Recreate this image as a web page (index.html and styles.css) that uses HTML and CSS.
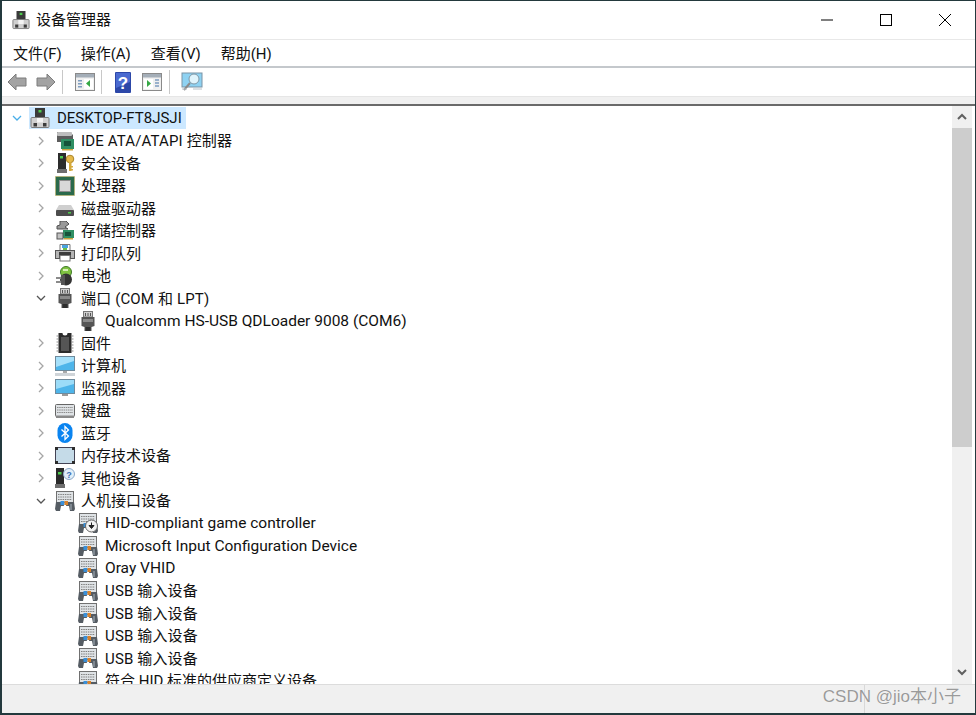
FILE: index.html
```html
<!DOCTYPE html>
<html lang="zh-CN">
<head>
    <meta charset="UTF-8">
    <title>设备管理器</title>
    <link rel="stylesheet" href="styles.css">
</head>
<body>
    <svg class="defs" width="0" height="0">
        <defs>
            <symbol id="i-root" viewBox="0 0 20 20">
                <rect x="5" y="0" width="10" height="11" fill="#3a3a3a"/>
                <rect x="8.500" y="2" width="3" height="2.500" fill="#4ccb4c"/>
                <rect x="1" y="9.500" width="18" height="10" rx="1" fill="#d0d0d0" stroke="#7c7c7c"/>
                <rect x="7" y="10" width="6" height="4.500" fill="#f4f4f4"/>
                <rect x="3.500" y="15" width="3.500" height="3.500" fill="#3c3c3c"/>
                <rect x="13" y="15" width="3.500" height="3.500" fill="#3c3c3c"/>
            </symbol>
            <symbol id="i-ide" viewBox="0 0 20 20">
                <path d="M2 1h13l3 3v7H2z" fill="#5c5c5c"/>
                <rect x="2" y="1" width="15" height="4" rx="1" fill="#bdbdbd"/>
                <rect x="6" y="8" width="13" height="10" fill="#2f8f63"/>
                <rect x="9" y="10" width="7" height="5" fill="#16543a"/>
                <rect x="7" y="18" width="11" height="1.500" fill="#c9a43c"/>
            </symbol>
            <symbol id="i-key" viewBox="0 0 20 20">
                <rect x="3" y="0" width="8" height="17" fill="#2c2c2c"/>
                <rect x="5" y="3" width="3" height="2.500" fill="#4ccb4c"/>
                <rect x="2" y="16" width="10" height="4" fill="#6e6e6e"/>
                <circle cx="15" cy="6" r="3.800" fill="#e5b94a" stroke="#a9842a"/>
                <rect x="14" y="9" width="2.500" height="9" fill="#d5a93a"/>
                <rect x="16" y="13" width="2" height="1.500" fill="#d5a93a"/>
                <rect x="16" y="16" width="2" height="1.500" fill="#d5a93a"/>
            </symbol>
            <symbol id="i-cpu" viewBox="0 0 20 20">
                <rect x="0.500" y="0.500" width="19" height="19" fill="#2f6b4c" stroke="#c9b25a" stroke-dasharray="1 1"/>
                <rect x="1.500" y="1.500" width="17" height="17" fill="#2a6a4b"/>
                <rect x="4.500" y="4.500" width="11" height="11" fill="#d8d8d8" stroke="#8c8c8c"/>
            </symbol>
            <symbol id="i-disk" viewBox="0 0 20 20">
                <path d="M4 7h12l3 5v4H1v-4z" fill="#cfcfcf"/>
                <rect x="1" y="12" width="18" height="6" rx="1" fill="#4c4c4c"/>
                <rect x="13" y="14" width="3" height="1.500" fill="#4ccb4c"/>
            </symbol>
            <symbol id="i-store" viewBox="0 0 20 20">
                <path d="M5 0h6l3 3-4 3 3 2H2V5l3-1z" fill="#9a9a9a" stroke="#505050"/>
                <rect x="8" y="9" width="11" height="8" fill="#2f8f63"/>
                <rect x="10" y="11" width="6" height="4" fill="#16543a"/>
                <rect x="2" y="12" width="6" height="6" fill="#c2c2c2" stroke="#555"/>
                <rect x="9" y="17" width="9" height="1.500" fill="#c9a43c"/>
            </symbol>
            <symbol id="i-print" viewBox="0 0 20 20">
                <path d="M5 1.500h10v6H5z" fill="#fff" stroke="#777"/>
                <rect x="7" y="2" width="6" height="3" fill="#4aa3df"/>
                <rect x="8" y="5" width="4" height="2" fill="#6cc04a"/>
                <rect x="0.500" y="7.500" width="19" height="8" fill="#b4b4b4" stroke="#555"/>
                <rect x="4" y="9" width="12" height="7" fill="#3c3c3c"/>
                <rect x="5" y="12.500" width="10" height="5.500" fill="#fff" stroke="#777"/>
            </symbol>
            <symbol id="i-bat" viewBox="0 0 20 20">
                <circle cx="11" cy="6" r="5.500" fill="#7fc241" stroke="#3e7a25"/>
                <circle cx="11" cy="13.500" r="6" fill="#333"/>
                <path d="M1 12h6M1 16h6" stroke="#8a8a8a" stroke-width="2"/>
                <path d="M6 9h4v10H6z" fill="#555"/>
                <path d="M8 4h5" stroke="#d5eeb8" stroke-width="2"/>
            </symbol>
            <symbol id="i-port" viewBox="0 0 20 20">
                <rect x="5.500" y="0.500" width="9" height="5.500" fill="#cfcfcf" stroke="#777"/>
                <path d="M7.500 2v3M10 2v3M12.500 2v3" stroke="#555"/>
                <path d="M3.500 6h13v9l-3 1v4h-7v-4l-3-1z" fill="#555"/>
                <rect x="5" y="8" width="10" height="3" fill="#8a8a8a"/>
                <rect x="7.500" y="16" width="5" height="4" fill="#2e2e2e"/>
            </symbol>
            <symbol id="i-chip" viewBox="0 0 20 20">
                <path d="M3.500 0h4a2.500 2.500 0 0 0 5 0h4v20h-13z" fill="#2c2c2c"/>
                <rect x="6" y="4" width="8" height="14" fill="#555"/>
                <path d="M1.500 3h2M1.500 6h2M1.500 9h2M1.500 12h2M1.500 15h2M1.500 18h2M16.500 3h2M16.500 6h2M16.500 9h2M16.500 12h2M16.500 15h2M16.500 18h2" stroke="#8f8f8f"/>
            </symbol>
            <symbol id="i-pc" viewBox="0 0 20 20">
                <rect x="0.500" y="0.500" width="19" height="14" fill="#4eb5ea" stroke="#6e8a9c"/>
                <path d="M1 1h18v4L1 11z" fill="#a6e0fa"/>
                <rect x="8" y="15" width="4" height="2" fill="#a9a9a9"/>
                <rect x="0" y="17" width="20" height="3" fill="#cfd4d8"/>
            </symbol>
            <symbol id="i-mon" viewBox="0 0 20 20">
                <rect x="0.500" y="1.500" width="19" height="14" fill="#4eb5ea" stroke="#6e8a9c"/>
                <path d="M1 2h18v4L1 11z" fill="#9cdcf8"/>
                <rect x="7" y="16" width="6" height="2" fill="#9a9a9a"/>
            </symbol>
            <symbol id="i-kbd" viewBox="0 0 20 20">
                <rect x="0.500" y="3.500" width="19" height="12" rx="1" fill="#dfe3e6" stroke="#666"/>
                <path d="M2 6.500h16M2 9h16M2 11.500h16" stroke="#8a8a8a" stroke-dasharray="1.500 .7"/>
                <rect x="1" y="14.500" width="18" height="2.500" fill="#8a8a8a"/>
            </symbol>
            <symbol id="i-bt" viewBox="0 0 20 20">
                <rect x="2.500" y="0" width="15" height="20" rx="7.500" fill="#0a84f0"/>
                <path d="M6.500 6.500l7 6.500-3.500 3.500v-13l3.500 3.500-7 6.500" fill="none" stroke="#fff" stroke-width="1.300"/>
            </symbol>
            <symbol id="i-mem" viewBox="0 0 20 20">
                <rect x="0.500" y="1.500" width="19" height="16" rx="1" fill="#c5dbe8" stroke="#445"/>
                <path d="M0 1h3v3H0zM17 1h3v3h-3zM0 15h3v3H0zM17 15h3v3h-3z" fill="#2c2c2c"/>
            </symbol>
            <symbol id="i-other" viewBox="0 0 20 20">
                <rect x="1" y="0" width="8" height="17" fill="#2a2a2a"/>
                <rect x="3" y="4" width="3.500" height="2.500" fill="#4ccb4c"/>
                <rect x="0" y="16" width="10" height="4" fill="#6e6e6e"/>
                <circle cx="14" cy="6" r="5.500" fill="#e2eef8" stroke="#8aa8c8"/>
                <text class="q-small" x="14" y="9.500">?</text>
            </symbol>
            <symbol id="i-hid" viewBox="0 0 20 20">
                <rect x="1.500" y="0.500" width="17" height="11" fill="#dfe3e6" stroke="#707070"/>
                <path d="M3 3.500h14M3 6h14M3 8.500h14" stroke="#808080" stroke-dasharray="1.500 .8"/>
                <path d="M1 11h7l1 4H6l-1 5H1l-1-2z" fill="#555c63"/>
                <path d="M12 11h7l1 7-1 2h-4l-1-5h-3z" fill="#555c63"/>
                <rect x="5.500" y="10" width="4" height="4" fill="#3a8fd8"/>
                <rect x="9.500" y="10" width="3.500" height="4" fill="#d9822b"/>
                <path d="M16 13v6" stroke="#a9b4bf"/>
            </symbol>
            <symbol id="i-hid-dl" viewBox="0 0 20 20">
                <use href="#i-hid"/>
                <circle cx="13.500" cy="13" r="6" fill="#f2f2f2" stroke="#666"/>
                <path d="M13.500 9.500v5M11 12.500l2.500 3 2.500-3z" fill="#222" stroke="#222"/>
            </symbol>
            <symbol id="c-right" viewBox="0 0 12 12">
                <path d="M4 2l4 4-4 4" fill="none" stroke="#a6a6a6" stroke-width="1.300"/>
            </symbol>
            <symbol id="c-down" viewBox="0 0 12 12">
                <path d="M2 4l4 4 4-4" fill="none" stroke="#555" stroke-width="1.300"/>
            </symbol>
            <symbol id="c-blue" viewBox="0 0 12 12">
                <path d="M2 4l4 4 4-4" fill="none" stroke="#4aaee8" stroke-width="1.300"/>
            </symbol>
            <symbol id="t-panel" viewBox="0 0 20 20">
                <rect x="0.500" y="1.500" width="19" height="17" fill="#f0f0f0" stroke="#8a8a8a"/>
                <rect x="1" y="2" width="18" height="3.500" fill="#a4aeb8"/>
                <rect x="3" y="8" width="4" height="1.500" fill="#7d9cc0"/>
                <rect x="3" y="11" width="4" height="1.500" fill="#7d9cc0"/>
                <rect x="3" y="14" width="4" height="1.500" fill="#7d9cc0"/>
            </symbol>
        </defs>
    </svg>

    <div class="window">
        <header class="titlebar">
            <svg class="app-icon"><use href="#i-root"/></svg>
            <span class="title">设备管理器</span>
            <div class="win-buttons">
                <svg class="win-btn" viewBox="0 0 12 12"><path d="M0 6h12" stroke="#000"/></svg>
                <svg class="win-btn" viewBox="0 0 12 12"><rect x=".5" y=".5" width="11" height="11" fill="none" stroke="#000"/></svg>
                <svg class="win-btn" viewBox="0 0 12 12"><path d="M0 0l12 12M12 0L0 12" stroke="#000"/></svg>
            </div>
        </header>

        <nav class="menubar">
            <span>文件(F)</span>
            <span>操作(A)</span>
            <span>查看(V)</span>
            <span>帮助(H)</span>
        </nav>

        <div class="toolbar">
            <svg class="tool arrow" viewBox="0 0 20 18"><path d="M1 9l8-8v4h10v8H9v4z" fill="#a3a3a3" stroke="#7c7c7c"/></svg>
            <svg class="tool arrow" viewBox="0 0 20 18"><path d="M19 9l-8-8v4H1v8h10v4z" fill="#a3a3a3" stroke="#7c7c7c"/></svg>
            <i class="tool-sep"></i>
            <svg class="tool" viewBox="0 0 20 20"><use href="#t-panel"/><rect x="9" y="7" width="9" height="10" fill="#fff"/><path d="M15 8v7l-4-3.500z" fill="#35a845"/></svg>
            <i class="tool-sep"></i>
            <svg class="tool help" viewBox="0 0 16 21"><rect width="16" height="21" rx="1" fill="#2c47a8"/><path d="M1 1h14v9L1 16z" fill="#4a6ad0"/><text class="q-big" x="8" y="17">?</text></svg>
            <svg class="tool" viewBox="0 0 20 20"><use href="#t-panel"/><rect x="2" y="7" width="9" height="10" fill="#fff"/><path d="M5 8v7l4-3.500z" fill="#35a845"/><path d="M13 8h4M13 11h4M13 14h4" stroke="#7d9cc0" stroke-width="1.500"/></svg>
            <i class="tool-sep"></i>
            <svg class="tool scan" viewBox="0 0 22 20"><rect x="1" y="1" width="20" height="14" fill="#8ed2f2" stroke="#7a93a5"/><circle cx="13" cy="7" r="5" fill="#e0f4fc" stroke="#7f97a6"/><path d="M9 11l-6 7" stroke="#8a8a8a" stroke-width="2"/><path d="M1 17h5M12 17h9" stroke="#b9c2c9"/></svg>
        </div>
        <div class="band"></div>

        <main class="content">
            <div class="tree">
                <div class="row root">
                    <svg class="chev"><use href="#c-blue"/></svg>
                    <div class="root-label">
                        <svg class="icon"><use href="#i-root"/></svg>
                        <span class="root-name">DESKTOP-FT8JSJI</span>
                    </div>
                </div>
                <div class="row"><svg class="chev"><use href="#c-right"/></svg><svg class="icon"><use href="#i-ide"/></svg><span class="mixed">IDE ATA/ATAPI 控制器</span></div>
                <div class="row"><svg class="chev"><use href="#c-right"/></svg><svg class="icon"><use href="#i-key"/></svg><span>安全设备</span></div>
                <div class="row"><svg class="chev"><use href="#c-right"/></svg><svg class="icon"><use href="#i-cpu"/></svg><span>处理器</span></div>
                <div class="row"><svg class="chev"><use href="#c-right"/></svg><svg class="icon"><use href="#i-disk"/></svg><span>磁盘驱动器</span></div>
                <div class="row"><svg class="chev"><use href="#c-right"/></svg><svg class="icon"><use href="#i-store"/></svg><span>存储控制器</span></div>
                <div class="row"><svg class="chev"><use href="#c-right"/></svg><svg class="icon"><use href="#i-print"/></svg><span>打印队列</span></div>
                <div class="row"><svg class="chev"><use href="#c-right"/></svg><svg class="icon"><use href="#i-bat"/></svg><span>电池</span></div>
                <div class="row"><svg class="chev"><use href="#c-down"/></svg><svg class="icon"><use href="#i-port"/></svg><span class="mixed">端口 (COM 和 LPT)</span></div>
                <div class="row child"><svg class="icon"><use href="#i-port"/></svg><span class="latin">Qualcomm HS-USB QDLoader 9008 (COM6)</span></div>
                <div class="row"><svg class="chev"><use href="#c-right"/></svg><svg class="icon"><use href="#i-chip"/></svg><span>固件</span></div>
                <div class="row"><svg class="chev"><use href="#c-right"/></svg><svg class="icon"><use href="#i-pc"/></svg><span>计算机</span></div>
                <div class="row"><svg class="chev"><use href="#c-right"/></svg><svg class="icon"><use href="#i-mon"/></svg><span>监视器</span></div>
                <div class="row"><svg class="chev"><use href="#c-right"/></svg><svg class="icon"><use href="#i-kbd"/></svg><span>键盘</span></div>
                <div class="row"><svg class="chev"><use href="#c-right"/></svg><svg class="icon"><use href="#i-bt"/></svg><span>蓝牙</span></div>
                <div class="row"><svg class="chev"><use href="#c-right"/></svg><svg class="icon"><use href="#i-mem"/></svg><span>内存技术设备</span></div>
                <div class="row"><svg class="chev"><use href="#c-right"/></svg><svg class="icon"><use href="#i-other"/></svg><span>其他设备</span></div>
                <div class="row"><svg class="chev"><use href="#c-down"/></svg><svg class="icon"><use href="#i-hid"/></svg><span>人机接口设备</span></div>
                <div class="row child"><svg class="icon"><use href="#i-hid-dl"/></svg><span class="latin">HID-compliant game controller</span></div>
                <div class="row child"><svg class="icon"><use href="#i-hid"/></svg><span class="latin">Microsoft Input Configuration Device</span></div>
                <div class="row child"><svg class="icon"><use href="#i-hid"/></svg><span class="latin">Oray VHID</span></div>
                <div class="row child"><svg class="icon"><use href="#i-hid"/></svg><span class="mixed">USB 输入设备</span></div>
                <div class="row child"><svg class="icon"><use href="#i-hid"/></svg><span class="mixed">USB 输入设备</span></div>
                <div class="row child"><svg class="icon"><use href="#i-hid"/></svg><span class="mixed">USB 输入设备</span></div>
                <div class="row child"><svg class="icon"><use href="#i-hid"/></svg><span class="mixed">USB 输入设备</span></div>
                <div class="row child"><svg class="icon"><use href="#i-hid"/></svg><span>符合 HID 标准的供应商定义设备</span></div>
            </div>
            <div class="scrollbar">
                <svg class="scroll-arrow" viewBox="0 0 12 12"><path d="M2 8l4-4 4 4" fill="none" stroke="#606060" stroke-width="2"/></svg>
                <div class="thumb"></div>
                <svg class="scroll-arrow" viewBox="0 0 12 12"><path d="M2 4l4 4 4-4" fill="none" stroke="#606060" stroke-width="2"/></svg>
            </div>
        </main>

        <footer class="statusbar">
            <div class="status-main"></div>
            <div class="status-side"><span class="watermark">CSDN @jio本小子</span></div>
        </footer>
    </div>
</body>
</html>
```

FILE: styles.css
```css
body {
    margin: 0;
    background-color: #23393d;
    font-family: Roboto, "Noto Sans CJK SC", sans-serif;
    font-size: 15px;
    color: #111;
    overflow: hidden;
}
.defs {
    position: absolute;
}
.window {
    height: 712px;
    margin: 1px 1px 2px 2px;
    background-color: #fff;
    display: flex;
    flex-direction: column;
}
.titlebar {
    height: 38px;
    flex-shrink: 0;
    display: flex;
    align-items: center;
    padding-left: 10px;
    border-bottom: 1px solid #e8e8e8;
}
.app-icon {
    width: 18px;
    height: 20px;
    margin-right: 6px;
}
.title {
    padding-bottom: 4px;
}
.win-buttons {
    margin-left: auto;
    display: flex;
    gap: 47px;
    padding-right: 24px;
}
.win-btn {
    width: 12px;
    height: 12px;
}
.menubar {
    height: 26px;
    flex-shrink: 0;
    display: flex;
    align-items: center;
    gap: 20px;
    padding-left: 11px;
    border-bottom: 2px solid #c4c8cc;
}
.menubar span {
    padding-bottom: 2px;
}
.menubar span:first-child {
    margin-right: -1px;
}
.toolbar {
    height: 28px;
    flex-shrink: 0;
    display: flex;
    align-items: center;
    padding-left: 5px;
}
.tool {
    width: 20px;
    height: 20px;
    flex-shrink: 0;
}
.arrow {
    margin-right: 9px;
}
.arrow + .arrow {
    margin-right: 0;
}
.help {
    width: 16px;
    height: 21px;
    margin-left: 1px;
    margin-right: 11px;
}
.scan {
    width: 22px;
}
.tool-sep {
    width: 1px;
    height: 24px;
    background-color: #c8c8c8;
    margin: 0 12px 0 6px;
}
.help + .tool + .tool-sep {
    margin: 0 11px 0 7px;
}
.band {
    height: 7px;
    flex-shrink: 0;
    background-color: #f0f0f0;
    border-top: 1px solid #e6e6e6;
    border-bottom: 2px solid #6a6a6a;
}
.content {
    flex: 1;
    min-height: 0;
    display: flex;
}
.tree {
    flex: 1;
    overflow: hidden;
    padding-top: 1px;
}
.row {
    height: 22.5px;
    display: flex;
    align-items: center;
    padding-left: 33px;
    white-space: nowrap;
}
.row > span {
    padding-bottom: 2px;
}
.row > .latin {
    padding-bottom: 0;
    font-size: 15.5px;
}
.mixed {
    letter-spacing: 0.15px;
}
.child {
    padding-left: 77px;
}
.root {
    padding-left: 9px;
}
.root .chev {
    margin-right: 6px;
}
.chev {
    width: 12px;
    height: 12px;
    margin-right: 8px;
    flex-shrink: 0;
}
.icon {
    width: 20px;
    height: 20px;
    margin-right: 6px;
    flex-shrink: 0;
}
.child .icon {
    margin-left: -1px;
    margin-right: 7px;
}
.root-label {
    display: flex;
    align-items: center;
    height: 22px;
    padding-left: 1px;
    padding-right: 4px;
    background-color: #cce8ff;
}
.root-label .icon {
    margin-right: 7px;
}
.scrollbar {
    width: 20px;
    margin-right: 3px;
    flex-shrink: 0;
    background-color: #f0f0f0;
    display: flex;
    flex-direction: column;
    align-items: center;
}
.scroll-arrow {
    width: 12px;
    height: 12px;
    margin: 5px 0;
    flex-shrink: 0;
}
.thumb {
    width: 100%;
    height: 319px;
    background-color: #cdcdcd;
    margin-bottom: auto;
}
.thumb + .scroll-arrow {
    margin-bottom: 6px;
}
.statusbar {
    height: 28px;
    flex-shrink: 0;
    display: flex;
    background-color: #f0f0f0;
    border-top: 1px solid #dcdcdc;
}
.status-main {
    width: 862px;
    border-right: 1px solid #d8d8d8;
}
.status-side {
    flex: 1;
    position: relative;
}
.watermark {
    position: absolute;
    right: 14px;
    top: 1px;
    font-family: "Liberation Sans", "Noto Sans CJK SC", sans-serif;
    font-size: 17px;
    line-height: 22px;
    color: #9a9a9a;
    text-shadow: 0 0 1px #fff;
    white-space: nowrap;
}
.q-small {
    font: bold 9px "Liberation Sans", sans-serif;
    fill: #3b6fb5;
    text-anchor: middle;
}
.q-big {
    font: bold 17px "Liberation Sans", sans-serif;
    fill: #fff;
    text-anchor: middle;
}
```
